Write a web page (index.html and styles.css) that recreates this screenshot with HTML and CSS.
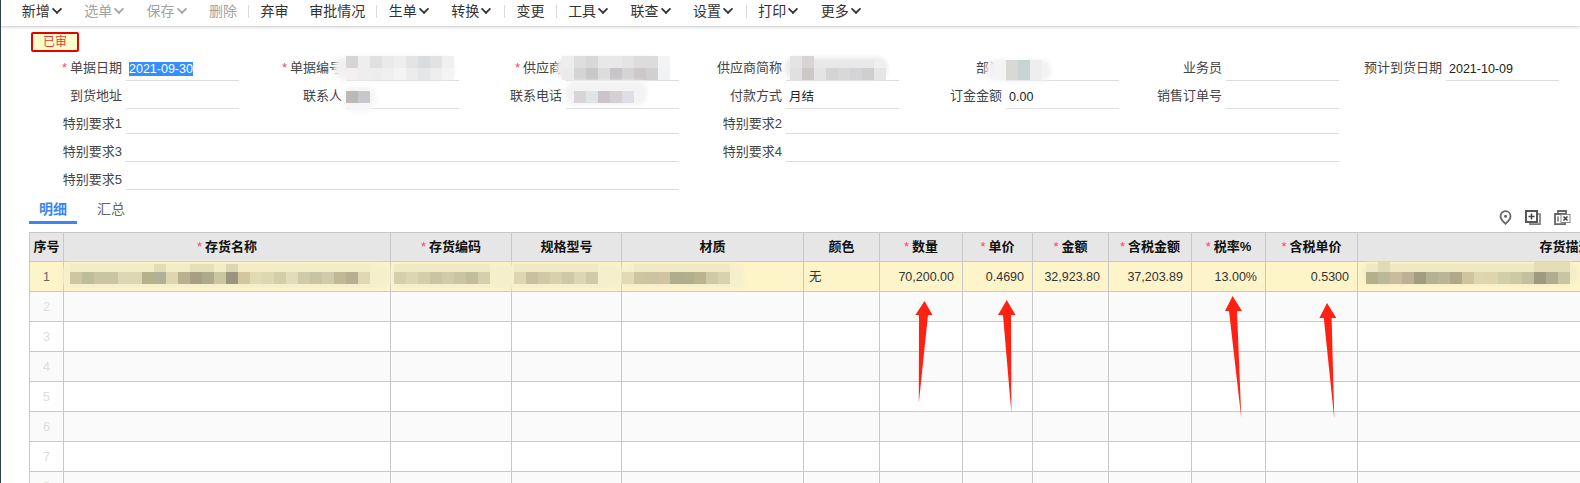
FILE: index.html
```html
<!DOCTYPE html>
<html lang="zh-CN">
<head>
<meta charset="utf-8">
<title>采购订单</title>
<link rel="stylesheet" href="styles.css">
</head>
<body>
<div class="page">
  <nav class="toolbar">
    <span class="tool menu">新增</span>
    <span class="tool menu off">选单</span>
    <span class="tool menu off">保存</span>
    <span class="tool off">删除</span>
    <i class="sep"></i>
    <span class="tool">弃审</span>
    <span class="tool">审批情况</span>
    <i class="sep"></i>
    <span class="tool menu">生单</span>
    <span class="tool menu">转换</span>
    <i class="sep"></i>
    <span class="tool">变更</span>
    <i class="sep"></i>
    <span class="tool menu">工具</span>
    <span class="tool menu">联查</span>
    <span class="tool menu">设置</span>
    <i class="sep"></i>
    <span class="tool menu">打印</span>
    <span class="tool menu">更多</span>
  </nav>

  <div class="badge">已审</div>

  <section class="form">
    <div class="field"><label><b>*</b>单据日期</label><div class="value"><span class="selected">2021-09-30</span></div></div>
    <div class="field"><label><b>*</b>单据编号</label><div class="value"></div></div>
    <div class="field"><label><b>*</b>供应商</label><div class="value"></div></div>
    <div class="field"><label>供应商简称</label><div class="value"></div></div>
    <div class="field"><label>部门</label><div class="value"></div></div>
    <div class="field"><label>业务员</label><div class="value"></div></div>
    <div class="field"><label>预计到货日期</label><div class="value">2021-10-09</div></div>

    <div class="field"><label>到货地址</label><div class="value"></div></div>
    <div class="field"><label>联系人</label><div class="value"></div></div>
    <div class="field"><label>联系电话</label><div class="value"></div></div>
    <div class="field"><label>付款方式</label><div class="value">月结</div></div>
    <div class="field"><label>订金金额</label><div class="value">0.00</div></div>
    <div class="field end"><label>销售订单号</label><div class="value"></div></div>

    <div class="field wide"><label>特别要求1</label><div class="value"></div></div>
    <div class="field wide"><label>特别要求2</label><div class="value"></div></div>
    <div class="field wide"><label>特别要求3</label><div class="value"></div></div>
    <div class="field wide"><label>特别要求4</label><div class="value"></div></div>
    <div class="field wide"><label>特别要求5</label><div class="value"></div></div>
  </section>

  <div class="tabbar">
    <div class="tabs">
      <span class="tab active">明细</span>
      <span class="tab">汇总</span>
    </div>
    <div class="icons">
      <svg width="13" height="15" viewBox="0 0 13 15"><path d="M6.5 1.2a5 5 0 0 0-5 5c0 3 3 5.600 5 7.600 2-2 5-4.600 5-7.600a5 5 0 0 0-5-5z" fill="none" stroke="#666" stroke-width="1.800"/><circle cx="6.500" cy="6.200" r="1.500" fill="#666"/></svg>
      <svg width="16" height="15" viewBox="0 0 16 15"><path d="M12.500 4H15v10.200H5V12" fill="none" stroke="#777c84" stroke-width="1.700"/><rect x="1" y="1" width="11" height="11" fill="#fff" stroke="#555" stroke-width="2"/><path d="M6.500 3.500v6M3.500 6.500h6" stroke="#444" stroke-width="1.500"/></svg>
      <svg width="17" height="15" viewBox="0 0 17 15"><path d="M4 3.500V1h8v3M1 4h10v10.200H1z" fill="none" stroke="#666" stroke-width="1.800"/><rect x="7" y="4.500" width="9" height="8" fill="#fff" stroke="#888" stroke-width="1"/><path d="M9.500 6.500l4 4M13.500 6.500l-4 4" stroke="#444" stroke-width="1.600"/><path d="M4 6.500v5" stroke="#666" stroke-width="1.400"/></svg>
    </div>
  </div>

  <div class="grid-wrap">
    <table class="grid">
      <colgroup>
        <col class="c-no"><col class="c-name"><col class="c-code"><col class="c-spec"><col class="c-mat"><col class="c-color"><col class="c-qty"><col class="c-price"><col class="c-amt"><col class="c-taxamt"><col class="c-rate"><col class="c-taxprice"><col class="c-desc">
      </colgroup>
      <thead>
        <tr>
          <th>序号</th>
          <th><b>*</b>存货名称</th>
          <th><b>*</b>存货编码</th>
          <th>规格型号</th>
          <th>材质</th>
          <th>颜色</th>
          <th><b>*</b>数量</th>
          <th><b>*</b>单价</th>
          <th><b>*</b>金额</th>
          <th><b>*</b>含税金额</th>
          <th><b>*</b>税率%</th>
          <th><b>*</b>含税单价</th>
          <th>存货描述</th>
        </tr>
      </thead>
      <tbody>
        <tr class="current">
          <td class="no">1</td><td></td><td></td><td></td><td></td><td>无</td>
          <td class="num">70,200.00</td><td class="num">0.4690</td><td class="num">32,923.80</td><td class="num">37,203.89</td><td class="num">13.00%</td><td class="num">0.5300</td><td></td>
        </tr>
        <tr class="even"><td class="no">2</td><td></td><td></td><td></td><td></td><td></td><td></td><td></td><td></td><td></td><td></td><td></td><td></td></tr>
        <tr><td class="no">3</td><td></td><td></td><td></td><td></td><td></td><td></td><td></td><td></td><td></td><td></td><td></td><td></td></tr>
        <tr class="even"><td class="no">4</td><td></td><td></td><td></td><td></td><td></td><td></td><td></td><td></td><td></td><td></td><td></td><td></td></tr>
        <tr><td class="no">5</td><td></td><td></td><td></td><td></td><td></td><td></td><td></td><td></td><td></td><td></td><td></td><td></td></tr>
        <tr class="even"><td class="no">6</td><td></td><td></td><td></td><td></td><td></td><td></td><td></td><td></td><td></td><td></td><td></td><td></td></tr>
        <tr><td class="no">7</td><td></td><td></td><td></td><td></td><td></td><td></td><td></td><td></td><td></td><td></td><td></td><td></td></tr>
        <tr class="even"><td class="no">8</td><td></td><td></td><td></td><td></td><td></td><td></td><td></td><td></td><td></td><td></td><td></td><td></td></tr>
      </tbody>
    </table>
  </div>

  <svg class="overlay" width="1580" height="483" viewBox="0 0 1580 483" aria-hidden="true">
    <defs><filter id="soft" x="-20%" y="-40%" width="140%" height="180%"><feGaussianBlur stdDeviation="2"/></filter></defs>

    <!-- blurred out: 单据编号 -->
    <rect x="334" y="57" width="120" height="23" rx="9" fill="#f1f1f1" filter="url(#soft)"/>
    <g>
      <rect x="346" y="56" width="12" height="12" fill="#d8d4d6"/><rect x="358" y="56" width="12" height="12" fill="#eeeeee"/><rect x="370" y="56" width="12" height="12" fill="#e0e0e0"/><rect x="382" y="56" width="12" height="12" fill="#eaeaea"/><rect x="394" y="56" width="12" height="12" fill="#eeeeee"/><rect x="406" y="56" width="12" height="12" fill="#e4e4e4"/><rect x="418" y="56" width="12" height="12" fill="#d8dce0"/><rect x="430" y="56" width="12" height="12" fill="#e2e2e2"/><rect x="442" y="56" width="12" height="12" fill="#f0f0f0"/>
      <rect x="346" y="68" width="12" height="12" fill="#f2f0f0"/><rect x="358" y="68" width="12" height="12" fill="#eeeeee"/><rect x="370" y="68" width="12" height="12" fill="#ededed"/><rect x="382" y="68" width="12" height="12" fill="#f0f0f0"/><rect x="394" y="68" width="12" height="12" fill="#f4f4f4"/><rect x="406" y="68" width="12" height="12" fill="#ececec"/><rect x="418" y="68" width="12" height="12" fill="#e4e6e8"/><rect x="430" y="68" width="12" height="12" fill="#eeeeee"/><rect x="442" y="68" width="12" height="12" fill="#f4f4f4"/>
    </g>
    <!-- blurred out: 联系人 -->
    <rect x="343" y="86" width="33" height="26" rx="11" fill="#f6f6f6" filter="url(#soft)"/>
    <rect x="346" y="91" width="12" height="12" fill="#bcb8b8"/><rect x="358" y="91" width="12" height="12" fill="#c8c8cc"/>
    <!-- blurred out: 供应商 -->
    <rect x="556" y="57" width="104" height="23" rx="10" fill="#eeeeee" filter="url(#soft)"/>
    <g>
      <rect x="562" y="56" width="12" height="12" fill="#eeeeee"/><rect x="574" y="56" width="12" height="12" fill="#e0dedc"/><rect x="586" y="56" width="12" height="12" fill="#d8d8d8"/><rect x="598" y="56" width="24" height="12" fill="#e8e8e8"/><rect x="622" y="56" width="12" height="12" fill="#e4e4e4"/><rect x="634" y="56" width="24" height="12" fill="#dcdcdc"/><rect x="658" y="56" width="12" height="12" fill="#f2f4f6"/>
      <rect x="562" y="68" width="12" height="12" fill="#ebebeb"/><rect x="574" y="68" width="12" height="12" fill="#d4d4d4"/><rect x="586" y="68" width="12" height="12" fill="#c8c8c8"/><rect x="598" y="68" width="12" height="12" fill="#dcdcdc"/><rect x="610" y="68" width="12" height="12" fill="#c8c4c8"/><rect x="622" y="68" width="12" height="12" fill="#d4d4d4"/><rect x="634" y="68" width="12" height="12" fill="#ccc8ca"/><rect x="646" y="68" width="12" height="12" fill="#d0d0d0"/><rect x="658" y="68" width="12" height="12" fill="#f0f2f4"/>
    </g>
    <!-- blurred out: 联系电话 -->
    <rect x="565" y="81" width="82" height="24" rx="10" fill="#f3f3f3" filter="url(#soft)"/>
    <g>
      <rect x="574" y="91" width="12" height="12" fill="#d8d4d8"/><rect x="586" y="91" width="12" height="12" fill="#e0e4e4"/><rect x="598" y="91" width="12" height="12" fill="#ccc4cc"/><rect x="610" y="91" width="12" height="12" fill="#d4d0d4"/><rect x="622" y="91" width="12" height="12" fill="#e0dee4"/>
    </g>
    <!-- blurred out: 供应商简称 -->
    <rect x="785" y="57" width="102" height="23" rx="9" fill="#ececec" filter="url(#soft)"/>
    <g>
      <rect x="790" y="56" width="12" height="12" fill="#e4e4e4"/><rect x="802" y="56" width="12" height="12" fill="#d8d4d4"/><rect x="814" y="60" width="60" height="8" fill="#e8e8e8"/><rect x="874" y="62" width="12" height="6" fill="#f0f0f0"/>
      <rect x="790" y="68" width="12" height="12" fill="#e0e0e0"/><rect x="802" y="68" width="12" height="12" fill="#ccc8c4"/><rect x="814" y="68" width="12" height="12" fill="#e4e4e4"/><rect x="826" y="68" width="12" height="12" fill="#d4d4d4"/><rect x="838" y="68" width="12" height="12" fill="#d8d8d8"/><rect x="850" y="68" width="12" height="12" fill="#d4d4d6"/><rect x="862" y="68" width="12" height="12" fill="#cfcfcf"/><rect x="874" y="68" width="12" height="12" fill="#e6e6e6"/>
    </g>
    <!-- blurred out: 部门 -->
    <rect x="986" y="60" width="65" height="21" rx="9" fill="#f2f2f4" filter="url(#soft)"/>
    <rect x="994" y="60" width="12" height="20" fill="#f4f4f4"/><rect x="1006" y="60" width="12" height="20" fill="#d8d8d4"/><rect x="1018" y="60" width="12" height="20" fill="#c8d4d4"/><rect x="1030" y="60" width="12" height="20" fill="#eeeeee"/>

    <!-- blurred out: row 1 -->
    <rect x="62" y="263" width="328" height="26" rx="9" fill="#f6efcb" filter="url(#soft)"/>
    <g>
      <rect x="70" y="264" width="300" height="8" fill="#f3ecc6"/><rect x="154" y="264" width="12" height="8" fill="#e3dcb6"/><rect x="190" y="264" width="24" height="8" fill="#e6dfba"/><rect x="226" y="264" width="12" height="8" fill="#ddd6b2"/>
      <rect x="70" y="272" width="12" height="12" fill="#cfc6a0"/><rect x="82" y="272" width="12" height="12" fill="#bdbd9c"/><rect x="94" y="272" width="24" height="12" fill="#c9c4a2"/><rect x="118" y="272" width="24" height="12" fill="#ddd7b3"/><rect x="142" y="272" width="12" height="12" fill="#b5b18c"/><rect x="154" y="272" width="12" height="12" fill="#b0b196"/><rect x="166" y="272" width="12" height="12" fill="#ddd6b0"/><rect x="178" y="272" width="12" height="12" fill="#b8b08f"/><rect x="190" y="272" width="12" height="12" fill="#a89e82"/><rect x="202" y="272" width="12" height="12" fill="#adaa8c"/><rect x="214" y="272" width="12" height="12" fill="#cac6a2"/><rect x="226" y="272" width="12" height="12" fill="#9b9580"/><rect x="238" y="272" width="12" height="12" fill="#d3c7a0"/><rect x="250" y="272" width="12" height="12" fill="#e2dab3"/><rect x="262" y="272" width="12" height="12" fill="#ddd8b0"/><rect x="274" y="272" width="12" height="12" fill="#d2cea8"/><rect x="286" y="272" width="12" height="12" fill="#e2dcb8"/><rect x="298" y="272" width="12" height="12" fill="#cfcaa8"/><rect x="310" y="272" width="12" height="12" fill="#c8c4a3"/><rect x="322" y="272" width="12" height="12" fill="#d0cbaa"/><rect x="334" y="272" width="12" height="12" fill="#c2b896"/><rect x="346" y="272" width="12" height="12" fill="#b8ae94"/><rect x="358" y="272" width="12" height="12" fill="#e0d8b5"/>
    </g>
    <rect x="392" y="264" width="230" height="25" rx="8" fill="#f6efcb" filter="url(#soft)"/>
    <g>
      <rect x="394" y="264" width="96" height="8" fill="#f0e9c3"/>
      <rect x="394" y="272" width="12" height="12" fill="#d6cfab"/><rect x="406" y="272" width="12" height="12" fill="#dcd6b2"/><rect x="418" y="272" width="12" height="12" fill="#d4cfaa"/><rect x="430" y="272" width="12" height="12" fill="#c9c5a0"/><rect x="442" y="272" width="12" height="12" fill="#d0caa8"/><rect x="454" y="272" width="12" height="12" fill="#c9c4a2"/><rect x="466" y="272" width="12" height="12" fill="#c2be9c"/><rect x="478" y="272" width="12" height="12" fill="#d4cfae"/>
      <rect x="514" y="264" width="84" height="8" fill="#f0e9c3"/>
      <rect x="514" y="272" width="12" height="12" fill="#dfd5b0"/><rect x="526" y="272" width="12" height="12" fill="#c9c0a0"/><rect x="538" y="272" width="12" height="12" fill="#d2c8a6"/><rect x="550" y="272" width="12" height="12" fill="#d8d0ac"/><rect x="562" y="272" width="12" height="12" fill="#cfc8a6"/><rect x="574" y="272" width="12" height="12" fill="#dcd6b4"/><rect x="586" y="272" width="12" height="12" fill="#d0caa8"/>
    </g>
    <rect x="622" y="264" width="122" height="24" rx="8" fill="#f6efcb" filter="url(#soft)"/>
    <g>
      <rect x="634" y="264" width="96" height="8" fill="#f0e9c3"/>
      <rect x="622" y="272" width="12" height="12" fill="#e2dab5"/><rect x="634" y="272" width="12" height="12" fill="#cdc4a0"/><rect x="646" y="272" width="12" height="12" fill="#cbc3a1"/><rect x="658" y="272" width="12" height="12" fill="#d1c4a0"/><rect x="670" y="272" width="12" height="12" fill="#aeae8e"/><rect x="682" y="272" width="12" height="12" fill="#b0ae8c"/><rect x="694" y="272" width="12" height="12" fill="#bcb28e"/><rect x="706" y="272" width="12" height="12" fill="#cfc9a5"/><rect x="718" y="272" width="12" height="12" fill="#d8d2ae"/>
    </g>
    <rect x="1362" y="262" width="216" height="23" rx="10" fill="#f4edc8" filter="url(#soft)"/>
    <g>
      <rect x="1366" y="264" width="204" height="8" fill="#efe8c2"/><rect x="1378" y="262" width="12" height="10" fill="#e2dbb8"/><rect x="1534" y="262" width="36" height="10" fill="#e4ddb8"/>
      <rect x="1366" y="272" width="12" height="12" fill="#b4b08c"/><rect x="1378" y="272" width="12" height="12" fill="#bbb998"/><rect x="1390" y="272" width="12" height="12" fill="#c8bc9a"/><rect x="1402" y="272" width="12" height="12" fill="#bdb094"/><rect x="1414" y="272" width="12" height="12" fill="#a39c80"/><rect x="1426" y="272" width="12" height="12" fill="#b3b292"/><rect x="1438" y="272" width="12" height="12" fill="#b8b696"/><rect x="1450" y="272" width="12" height="12" fill="#b0a888"/><rect x="1462" y="272" width="12" height="12" fill="#d0c49e"/><rect x="1474" y="272" width="12" height="12" fill="#ddd6b0"/><rect x="1486" y="272" width="12" height="12" fill="#dcd6aa"/><rect x="1498" y="272" width="12" height="12" fill="#d2cea8"/><rect x="1510" y="272" width="12" height="12" fill="#ccc9a5"/><rect x="1522" y="272" width="12" height="12" fill="#c4c09e"/><rect x="1534" y="272" width="12" height="12" fill="#9d9a80"/><rect x="1546" y="272" width="12" height="12" fill="#b0ac90"/><rect x="1558" y="272" width="12" height="12" fill="#c8c4a4"/>
    </g>

    <!-- annotation arrows -->
    <g fill="#ff2212">
      <polygon points="924.500,301 932.500,315 928,315 918.800,403 919,315 915.400,315"/>
      <polygon points="1006.700,300 1015.500,315 1011,315 1011.400,413 1003,315 998,315"/>
      <polygon points="1232.600,296 1242,311 1237,311 1241.300,418 1229,311 1225,311"/>
      <polygon points="1327,303 1336.300,318 1331.600,318 1334.300,419 1323.800,318 1319.400,318"/>
    </g>
  </svg>
</div>
</body>
</html>
```
FILE: styles.css
```css
* { box-sizing: border-box; }
html, body { margin: 0; padding: 0; height: 483px; overflow: hidden; background: #fff; }
body { font: 13px/18px "Liberation Sans", "Noto Sans CJK SC", sans-serif; color: #333; }

.page { position: relative; width: 1580px; height: 483px; border-left: 1px solid #2f3f55; overflow: hidden; }

.toolbar { display: flex; align-items: center; height: 26px; padding: 0 0 4px 10.500px; background: #fff; box-shadow: 0 1px 3px rgba(0, 0, 0, .22); font-size: 14px; color: #333; position: relative; }
.tool { padding: 0 10.300px; display: flex; align-items: center; white-space: nowrap; }
.tool.off { color: #a3a3a3; }
.tool.menu::after { content: ""; width: 6px; height: 6px; margin: -4px 2.800px 0 3px; border-right: 2px solid currentColor; border-bottom: 2px solid currentColor; transform: rotate(45deg) scale(.9); }
.sep { width: 1px; height: 13px; margin: 0 1px; background: #d6dade; }

.badge { width: 48px; height: 20px; margin: 6px 0 0 30px; border: 2px solid #e60000; border-radius: 2px; background: #ffffcc; color: #e33; font-size: 12px; line-height: 16px; text-align: center; }

.form { display: grid; grid-template-columns: repeat(7, 220px); grid-auto-rows: 28px; margin-top: 2px; padding-left: 18px; }
.field { display: flex; align-items: center; }
.field label { width: 103px; margin-right: 4px; flex: none; text-align: right; color: #444; white-space: nowrap; }
.field label b { margin-right: 3px; color: #f5476a; font-weight: 400; }
.value { flex: 1; height: 26px; padding: 6px 0 0 3px; border-bottom: 1px solid #ddd; color: #222; font-size: 12.500px; line-height: 17px; }
.selected { display: inline-block; height: 14px; background: #338fff; color: #fff; line-height: 14px; vertical-align: top; margin-top: 1px; }
.field.wide { grid-column: span 3; }
.field.wide .value { height: 20px; padding-top: 0; }
.field.end { grid-column: 6 / span 1; }

.tabbar { display: flex; justify-content: space-between; align-items: flex-end; height: 30px; padding-left: 28px; padding-right: 9px; }
.tabs { display: flex; }
.tab { width: 48px; height: 30px; margin-right: 10px; padding-top: 7px; text-align: center; font-size: 14px; line-height: 17px; color: #666; border-bottom: 3px solid transparent; }
.tab.active { color: #3d85f0; font-weight: 700; border-bottom-color: #3d85f0; }
.icons { display: flex; align-items: center; gap: 13px; height: 15px; margin-bottom: -1px; }
.icons svg { display: block; }

.grid-wrap { margin: 8px 0 0 28px; overflow: hidden; }
.grid { table-layout: fixed; width: 1745px; border-collapse: separate; border-spacing: 0; }
.c-no { width: 35px; } .c-name { width: 327px; } .c-code { width: 121px; } .c-spec { width: 110px; }
.c-mat { width: 182px; } .c-color { width: 76px; } .c-qty { width: 83px; } .c-price { width: 70px; }
.c-amt { width: 76px; } .c-taxamt { width: 83px; } .c-rate { width: 74px; } .c-taxprice { width: 92px; } .c-desc { width: 416px; }
.grid th, .grid td { height: 30px; padding: 0 5px; border-right: 1px solid #c8c8c8; border-bottom: 1px solid #c8c8c8; font-size: 12.500px; }
.grid th:first-child, .grid td:first-child { border-left: 1px solid #c8c8c8; }
.grid th { border-top: 1px solid #c8c8c8; background: #e6e6e6; color: #111; font-size: 13px; font-weight: 700; text-align: center; white-space: nowrap; padding: 0; }
.grid th b { margin-right: 3px; color: #f5476a; font-weight: 400; }
.grid td { color: #333; }
.grid td.no { padding: 0; text-align: center; color: #ddd; }
.grid td.num { padding-right: 8px; text-align: right; }
.grid tr.even td { background: #fafafa; }
.grid tr.current td { background: #fef4c9; }
.grid tr.current td.no { color: #666; }

.overlay { position: absolute; top: 0; left: -1px; pointer-events: none; }
```
